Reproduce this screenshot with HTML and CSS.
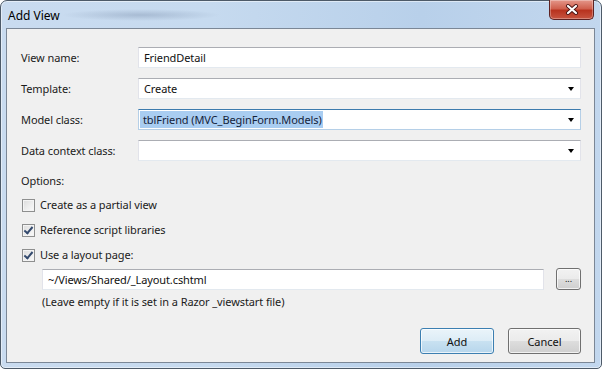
FILE: index.html
```html
<!DOCTYPE html>
<html lang="en">
<head>
  <meta charset="UTF-8">
  <title>Add View</title>
  <link rel="stylesheet" href="styles.css">
</head>
<body>
  <div class="window">
    <div class="titlebar">
      <span class="title">Add View</span>
      <span class="glass"></span>
      <button class="close" title="Close">
        <svg width="14" height="11" viewBox="0 0 14 11">
          <path d="M3 2 L11 9 M11 2 L3 9" stroke="#4a1414" stroke-width="4" stroke-linecap="round"/>
          <path d="M3 2 L11 9 M11 2 L3 9" stroke="#ffffff" stroke-width="2.2" stroke-linecap="round"/>
        </svg>
      </button>
    </div>

    <div class="client">
      <div class="fields">
        <label>View name:</label>
        <div class="box"><span>FriendDetail</span></div>

        <label>Template:</label>
        <div class="box combo"><span>Create</span><i class="arrow"></i></div>

        <label>Model class:</label>
        <div class="box combo focused"><span class="selected">tblFriend (MVC_BeginForm.Models)</span><i class="arrow"></i></div>

        <label>Data context class:</label>
        <div class="box combo"><span></span><i class="arrow"></i></div>
      </div>

      <div class="options">
        <div class="options-title">Options:</div>
        <label class="check"><span class="cb"></span>Create as a partial view</label>
        <label class="check"><span class="cb on"></span>Reference script libraries</label>
        <label class="check"><span class="cb on"></span>Use a layout page:</label>
        <div class="layout-row">
          <div class="box"><span>~/Views/Shared/_Layout.cshtml</span></div>
          <button class="btn browse">...</button>
        </div>
        <div class="hint">(Leave empty if it is set in a Razor _viewstart file)</div>
      </div>

      <div class="actions">
        <button class="btn default">Add</button>
        <button class="btn">Cancel</button>
      </div>
    </div>
  </div>
</body>
</html>
```

FILE: styles.css
```css
* {
  box-sizing: border-box;
}
body {
  margin: 0;
  width: 602px;
  height: 369px;
  background: #ffffff;
  font-family: "Noto Sans", "Open Sans", sans-serif;
  font-size: 11px;
  letter-spacing: -0.1px;
  color: #1b1b1b;
}
.window {
  width: 602px;
  height: 369px;
  display: flex;
  flex-direction: column;
  border: 1px solid #4d5a68;
  border-radius: 7px 7px 5px 5px;
  background: linear-gradient(90deg, #c9dbef 0%, #c6daef 35%, #b8d0ea 70%, #c2d7ee 100%);
  box-shadow: inset 0 0 0 1px rgba(255,255,255,0.5);
}
.titlebar {
  height: 27px;
  display: flex;
  align-items: flex-start;
  position: relative;
  padding-left: 7px;
}
.title {
  margin-top: 6px;
  font-size: 12px;
  letter-spacing: 0;
  color: #000;
  position: relative;
  z-index: 1;
}
.glass {
  position: absolute;
  left: 60px;
  top: 8px;
  width: 160px;
  height: 12px;
  border-radius: 6px;
  background: radial-gradient(ellipse at center, rgba(110,130,160,0.35), rgba(110,130,160,0) 70%);
}
.close {
  margin-left: auto;
  margin-right: 7px;
  margin-top: -1px;
  width: 45px;
  height: 20px;
  border: 1px solid #5e2222;
  border-top: none;
  border-radius: 0 0 5px 5px;
  background: linear-gradient(180deg, #e4978a 0%, #d0604e 45%, #b8331f 55%, #c75440 100%);
  box-shadow: inset 0 0 0 1px rgba(255,255,255,0.3);
  display: flex;
  align-items: center;
  justify-content: center;
  padding: 0;
}
.client {
  flex: 1;
  margin: 0 6px 5px 5px;
  border: 1px solid #7b8796;
  background: #f0f0f0;
  padding: 18px 13px 8px 14px;
  display: flex;
  flex-direction: column;
}
.fields {
  display: grid;
  grid-template-columns: 117px 1fr;
  row-gap: 10px;
  align-items: center;
}
.box {
  height: 21px;
  background: #fff;
  border: 1px solid #e2e3ea;
  border-top-color: #abadb3;
  border-bottom-color: #e3e9ef;
  display: flex;
  align-items: center;
  padding-left: 5px;
  color: #111;
}
.combo {
  justify-content: space-between;
  padding-right: 6px;
}
.focused {
  border-color: #b5cfe7;
  border-top-color: #3d7bad;
  padding-left: 1px;
}
.selected {
  background: #a9cdf1;
  color: #14233a;
  padding: 0 1px 0 3px;
  line-height: 17px;
}
.arrow {
  width: 0;
  height: 0;
  border-left: 3.5px solid transparent;
  border-right: 3.5px solid transparent;
  border-top: 4px solid #000;
  margin-top: 1px;
}
.options {
  display: flex;
  flex-direction: column;
}
.options-title {
  margin-top: 12px;
  line-height: 16px;
}
.check {
  display: flex;
  align-items: center;
  line-height: 16px;
  margin-top: 9px;
}
.check:first-of-type {
  margin-top: 8px;
}
.cb {
  width: 13px;
  height: 13px;
  margin: 0 5px 0 1px;
  border: 1px solid #8e8f8f;
  background: linear-gradient(135deg, #dcdcdc, #fbfbfb);
  box-shadow: inset 0 0 0 1px #f4f4f4;
  position: relative;
}
.cb.on::after {
  content: "";
  position: absolute;
  left: 3px;
  top: 0px;
  width: 3px;
  height: 7px;
  border-right: 2px solid #344a6e;
  border-bottom: 2px solid #344a6e;
  transform: rotate(40deg);
}
.layout-row {
  display: flex;
  align-items: center;
  gap: 12px;
  margin-top: 5px;
  margin-left: 21px;
}
.layout-row .box {
  flex: 1;
}
.hint {
  margin-top: 4px;
  margin-left: 21px;
  line-height: 16px;
}
.btn {
  font-family: inherit;
  font-size: 11px;
  letter-spacing: 0;
  color: #111;
  height: 26px;
  border: 1px solid #707070;
  border-radius: 3px;
  background: linear-gradient(180deg, #f2f2f2 0%, #ebebeb 50%, #dddddd 51%, #cfcfcf 100%);
  box-shadow: inset 0 0 0 1px rgba(255,255,255,0.7);
  padding: 0;
}
.browse {
  width: 25px;
  height: 22px;
  font-size: 9px;
  line-height: 10px;
}
.actions {
  margin-top: auto;
  display: flex;
  justify-content: flex-end;
  gap: 14px;
}
.actions .btn {
  width: 74px;
}
.actions .btn:last-child {
  width: 73px;
}
.btn.default {
  border-color: #3c7fb1;
  background: linear-gradient(180deg, #eaf4fa 0%, #dcecf6 50%, #c8e1f1 51%, #b7d6ec 100%);
}
```
